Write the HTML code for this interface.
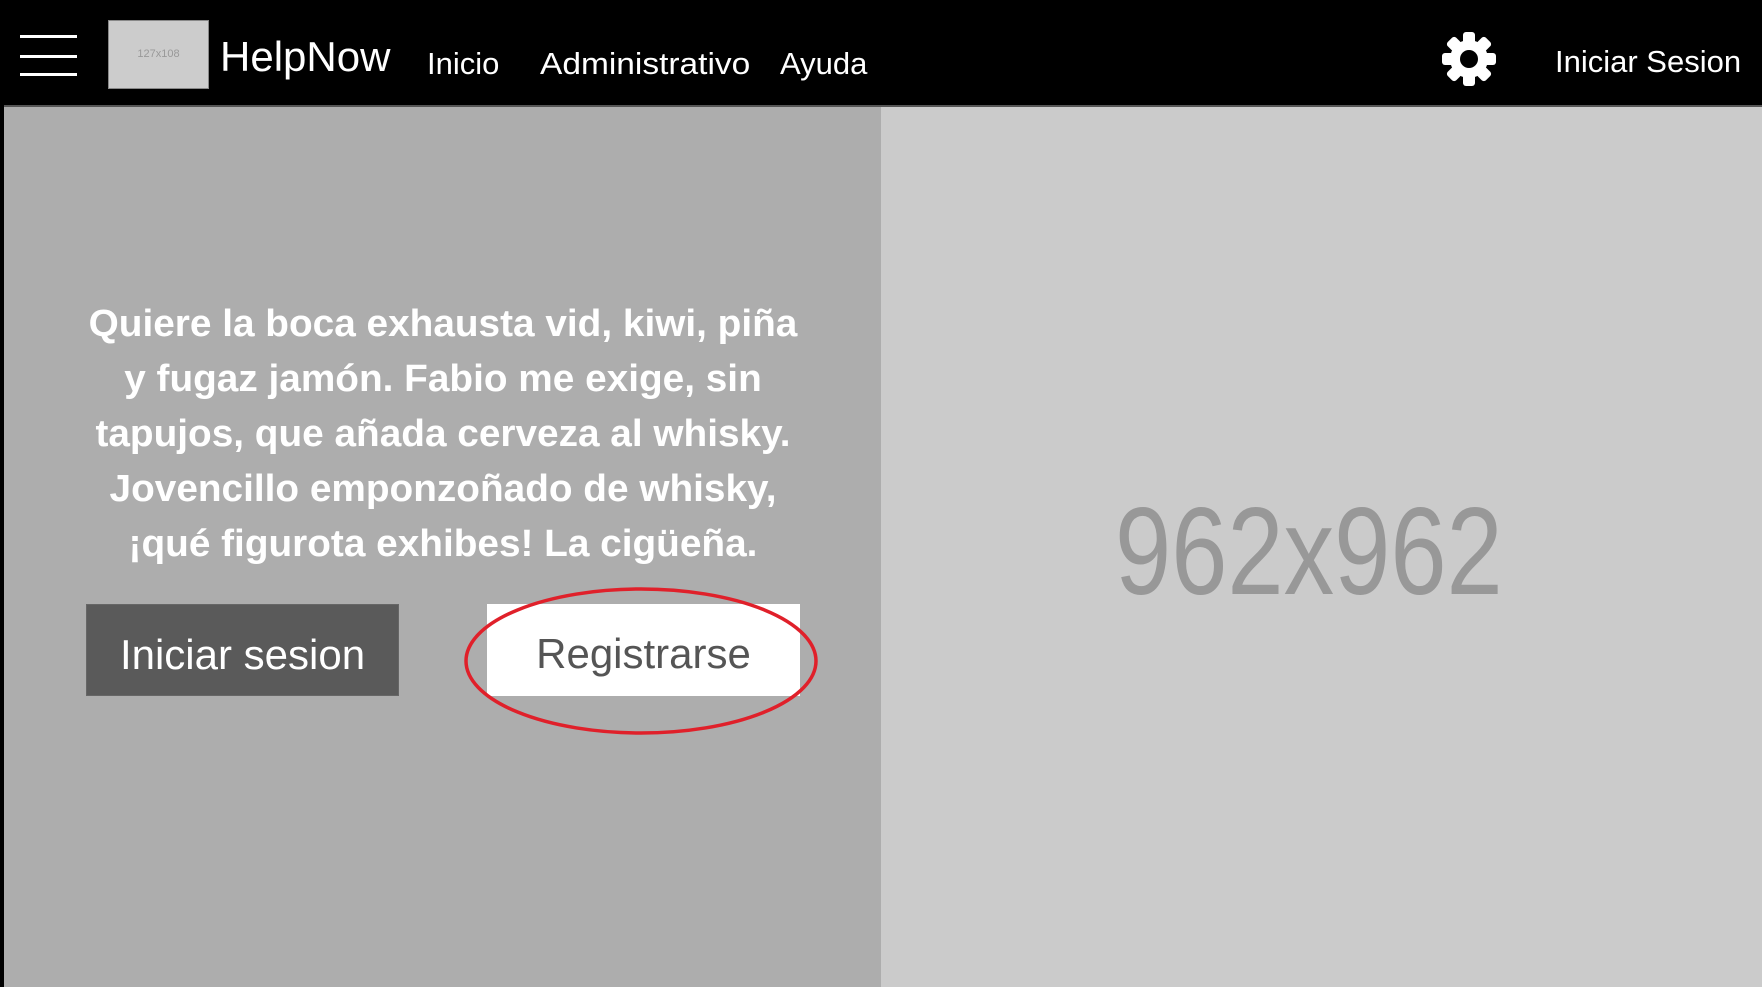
<!DOCTYPE html>
<html><head><meta charset="utf-8"><style>
*{margin:0;padding:0;box-sizing:border-box}
body{width:1762px;height:987px;overflow:hidden;background:#000;font-family:"Liberation Sans",sans-serif;position:relative}
.hdr{position:absolute;left:0;top:0;width:1762px;height:106px;background:#000}
.line{position:absolute;left:20px;width:57px;height:3px;background:#fff}
.logo{position:absolute;left:108px;top:20px;width:101px;height:69px;background:#ccc;border:1px solid #888;color:#999;font-size:11px;text-align:center;line-height:67px}
.nav{position:absolute;color:#fff;white-space:nowrap}
.left{position:absolute;left:4px;top:107px;width:877px;height:880px;background:#adadad}
.right{position:absolute;left:881px;top:107px;width:881px;height:880px;background:#cbcbcb}
.sep{position:absolute;left:4px;top:105px;width:1758px;height:2px;background:#555}
.para{position:absolute;left:43px;top:297px;width:800px;text-align:center;color:#fff;font-weight:bold;font-size:38px;line-height:55px;transform:scaleX(1.02);transform-origin:center top;white-space:nowrap}
.btn{position:absolute;top:604px;height:92px;width:313px;font-size:42px;text-align:center;line-height:100px}
.big{position:absolute;left:1115px;top:482px;font-size:124px;color:#989898;transform:scaleX(0.815);transform-origin:left top;white-space:nowrap;line-height:140px}
</style></head><body>
<div class="hdr">
<div class="line" style="top:35px"></div>
<div class="line" style="top:55px"></div>
<div class="line" style="top:73px"></div>
<div class="logo">127x108</div>
<div class="nav" style="left:220px;top:33px;font-size:42px">HelpNow</div>
<div class="nav" style="left:427px;top:46px;font-size:31px">Inicio</div>
<div class="nav" style="left:540px;top:46px;font-size:31px;transform:scaleX(1.08);transform-origin:left">Administrativo</div>
<div class="nav" style="left:780px;top:46px;font-size:31px">Ayuda</div>
<svg style="position:absolute;left:1441px;top:31px" width="56" height="56" viewBox="-28 -28 56 56">
<g fill="#fff">
<circle r="19"/>
<g id="t"><rect x="-6" y="-27" width="12" height="12" rx="3"/></g>
<use href="#t" transform="rotate(45)"/><use href="#t" transform="rotate(90)"/><use href="#t" transform="rotate(135)"/>
<use href="#t" transform="rotate(180)"/><use href="#t" transform="rotate(225)"/><use href="#t" transform="rotate(270)"/><use href="#t" transform="rotate(315)"/>
</g>
<circle r="9" fill="#000"/>
</svg>
<div class="nav" style="left:1555px;top:44px;font-size:31px">Iniciar Sesion</div>
</div>
<div class="sep"></div>
<div class="left"></div>
<div class="right"></div>
<div class="para">Quiere la boca exhausta vid, kiwi, piña<br>y fugaz jamón. Fabio me exige, sin<br>tapujos, que añada cerveza al whisky.<br>Jovencillo emponzoñado de whisky,<br>¡qué figurota exhibes! La cigüeña.</div>
<div class="btn" style="left:86px;background:#5a5a5a;color:#fff;border:1px solid #666">Iniciar sesion</div>
<div class="btn" style="left:487px;background:#fff;color:#555">Registrarse</div>
<svg style="position:absolute;left:0;top:0" width="1762" height="987">
<ellipse cx="641" cy="661" rx="175" ry="72" fill="none" stroke="#e0202a" stroke-width="3.5"/>
</svg>
<div class="big">962x962</div>
</body></html>
